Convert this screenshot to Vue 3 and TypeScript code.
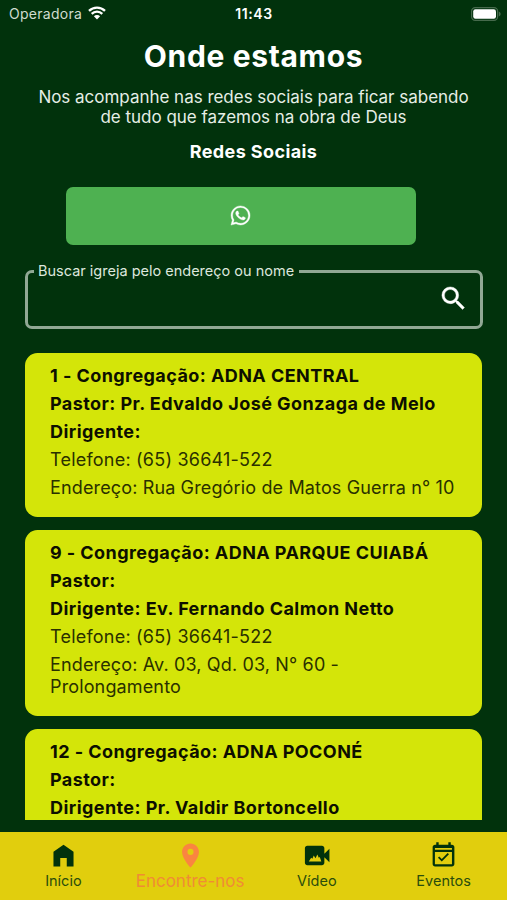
<script setup lang="ts">
interface Church {
  id: number
  name: string
  pastor: string
  leader: string
  phone?: string
  address?: string
}

const churches: Church[] = [
  { id: 1, name: 'ADNA CENTRAL', pastor: 'Pr. Edvaldo José Gonzaga de Melo', leader: '', phone: '(65) 36641-522', address: 'Rua Gregório de Matos Guerra n° 10' },
  { id: 9, name: 'ADNA PARQUE CUIABÁ', pastor: '', leader: 'Ev. Fernando Calmon Netto', phone: '(65) 36641-522', address: 'Av. 03, Qd. 03, N° 60 - Prolongamento' },
  { id: 12, name: 'ADNA POCONÉ', pastor: '', leader: 'Pr. Valdir Bortoncello' },
]

interface Tab {
  label: string
  path: string
  active?: boolean
}

const tabs: Tab[] = [
  { label: 'Início', path: 'M12 3L3.700 8.800v12.400h5.600v-7.200h5.400v7.200h5.600V8.800z' },
  { label: 'Encontre-nos', active: true, path: 'M12 2C8.130 2 5 5.130 5 9c0 5.250 7 13 7 13s7-7.750 7-13c0-3.870-3.130-7-7-7zm0 9.500a2.500 2.500 0 0 1 0-5 2.500 2.500 0 0 1 0 5z' },
  { label: 'Vídeo', path: 'M18.500 10.500V6c0-1.100-.9-2-2-2H4.400c-1.100 0-2 .9-2 2v12c0 1.100.9 2 2 2h12.100c1.100 0 2-.9 2-2v-4.500l4.200 4v-11zM5.600 17l2-3.200 1 .9 1.100-2.700 1.500 2.200 1.500-3 1.200 2.600.8-.5L16 17z' },
  { label: 'Eventos', path: 'M16.530 11.060L15.470 10l-4.880 4.880-2.120-2.120-1.060 1.060L10.590 17l5.940-5.940zM19 3h-1V1h-2v2H8V1H6v2H5c-1.110 0-1.990.9-1.990 2L3 19c0 1.100.890 2 2 2h14c1.100 0 2-.9 2-2V5c0-1.100-.9-2-2-2zm0 16.200H4.900V9H19v10.200zM4.900 7.200V5.700h14.100v1.500z' },
]
</script>

<template>
  <div class="screen">
    <header class="status">
      <div class="carrier">
        <span class="operator">Operadora</span>
        <svg class="wifi" viewBox="0 0 18 14" aria-hidden="true">
          <path d="M1 4.900a11.400 11.400 0 0 1 16 0M3.700 7.900a7.500 7.500 0 0 1 10.600 0" fill="none" stroke="#fff" stroke-width="2.3" />
          <path d="M9 13.400L5.900 10.300a4.400 4.400 0 0 1 6.200 0z" fill="#fff" />
        </svg>
      </div>
      <span class="clock">11:43</span>
      <svg class="battery" viewBox="0 0 30 14" aria-hidden="true">
        <rect x=".6" y=".6" width="26" height="12.8" rx="3.6" fill="none" stroke="#466a4c" stroke-width="1.200" />
        <rect x="2.200" y="2.200" width="22.800" height="9.600" rx="2.200" fill="#fff" />
        <path d="M27.800 4.600c2.400.8 2.400 4 0 4.800z" fill="#466a4c" />
      </svg>
    </header>

    <main class="content">
      <h1>Onde estamos</h1>
      <p class="intro">Nos acompanhe nas redes sociais para ficar sabendo<br />de tudo que fazemos na obra de Deus</p>
      <h2>Redes Sociais</h2>
      <button class="whatsapp" type="button" aria-label="WhatsApp">
        <svg viewBox="0 0 24 24" aria-hidden="true">
          <path d="M12.04 2C6.58 2 2.13 6.45 2.13 11.910c0 1.750.46 3.450 1.320 4.950L2.050 22l5.250-1.380c1.450.79 3.080 1.210 4.740 1.210 5.460 0 9.910-4.450 9.910-9.910 0-2.650-1.030-5.140-2.900-7.010A9.816 9.816 0 0 0 12.040 2m.010 1.670c2.200 0 4.260.860 5.820 2.420a8.225 8.225 0 0 1 2.410 5.830c0 4.540-3.700 8.230-8.240 8.230-1.480 0-2.930-.390-4.190-1.150l-.300-.170-3.120.820.830-3.040-.200-.320a8.188 8.188 0 0 1-1.260-4.380c.010-4.540 3.700-8.240 8.250-8.240M8.530 7.330c-.160 0-.430.060-.660.310-.220.250-.870.860-.870 2.070 0 1.220.890 2.390 1 2.560.140.170 1.760 2.670 4.250 3.730.590.270 1.050.420 1.410.530.590.190 1.130.160 1.560.100.480-.070 1.460-.600 1.670-1.180s.210-1.070.150-1.180c-.070-.100-.230-.160-.480-.270-.250-.140-1.470-.740-1.690-.820-.230-.080-.370-.120-.560.120-.160.250-.640.810-.780.970-.150.170-.290.190-.530.070-.260-.130-1.060-.390-2-1.230-.740-.660-1.230-1.470-1.380-1.720-.120-.240-.010-.390.110-.500.110-.110.270-.290.370-.440.130-.140.170-.250.250-.410.080-.170.040-.310-.020-.430-.060-.110-.560-1.350-.770-1.840-.200-.480-.400-.420-.560-.430-.140 0-.300-.010-.470-.010" fill="#fff" stroke="#fff" stroke-width=".4" />
        </svg>
      </button>

      <fieldset class="search">
        <legend>Buscar igreja pelo endereço ou nome</legend>
        <svg viewBox="0 0 24 24" aria-hidden="true">
          <path d="M15.500 14h-.79l-.28-.27A6.471 6.471 0 0 0 16 9.500 6.500 6.500 0 1 0 9.500 16c1.610 0 3.090-.590 4.230-1.570l.27.28v.79l5 4.990L20.490 19l-4.990-5zm-6 0C7.010 14 5 11.990 5 9.500S7.010 5 9.500 5 14 7.010 14 9.500 11.990 14 9.500 14z" fill="#fff" stroke="#fff" stroke-width=".3" />
        </svg>
      </fieldset>

      <section class="list">
        <article v-for="church in churches" :key="church.id" class="card">
          <strong>{{ church.id }} - Congregação: {{ church.name }}</strong>
          <strong>Pastor: {{ church.pastor }}</strong>
          <strong>Dirigente: {{ church.leader }}</strong>
          <span v-if="church.phone" class="phone">Telefone: {{ church.phone }}</span>
          <span v-if="church.address">Endereço: {{ church.address }}</span>
        </article>
      </section>
    </main>

    <nav class="tabs">
      <a v-for="tab in tabs" :key="tab.label" class="tab" :class="{ active: tab.active }">
        <svg viewBox="0 0 24 24" aria-hidden="true"><path :d="tab.path" fill="currentColor" fill-rule="evenodd" /></svg>
        <span>{{ tab.label }}</span>
      </a>
    </nav>
  </div>
</template>

<style>
body {
  margin: 0;
  background: #01320c;
}
</style>

<style scoped>
.screen {
  box-sizing: border-box;
  width: 507px;
  height: 900px;
  display: flex;
  flex-direction: column;
  overflow: hidden;
  background: #01320c;
  color: #fff;
  font-family: Inter, 'Liberation Sans', sans-serif;
}
.status {
  display: grid;
  grid-template-columns: 1fr auto 1fr;
  align-items: center;
  height: 28px;
  padding: 0 6px 0 9px;
  font-size: 14px;
  line-height: 20px;
}
.carrier {
  display: flex;
  align-items: center;
  gap: 6px;
}
.operator {
  color: #cfdccf;
  letter-spacing: 0.27px;
}
.wifi {
  width: 18px;
  height: 14px;
  margin-top: -2px;
}
.clock {
  margin-right: 2px;
  font-weight: 600;
  letter-spacing: 0.6px;
}
.battery {
  width: 30px;
  height: 14px;
  margin-top: -1px;
  justify-self: end;
}
.content {
  flex: none;
  height: 791.5px;
  display: flex;
  flex-direction: column;
  overflow: hidden;
  padding: 0 25px;
}
h1 {
  margin: 8px 0 0;
  font-size: 30px;
  line-height: 40px;
  font-weight: 700;
  letter-spacing: 0.65px;
  text-align: center;
}
.intro {
  margin: 10.5px 0 0;
  color: #e6eee6;
  font-size: 17px;
  line-height: 20.5px;
  letter-spacing: -0.02px;
  text-align: center;
  white-space: nowrap;
}
h2 {
  margin: 12px 0 0;
  font-size: 18px;
  line-height: 24px;
  font-weight: 700;
  letter-spacing: 0.4px;
  text-align: center;
}
.whatsapp {
  display: flex;
  flex: none;
  align-items: center;
  justify-content: center;
  width: 350px;
  height: 58.5px;
  margin: 23px 0 0 40.5px;
  padding: 0;
  border: 0;
  border-radius: 7px;
  background: #4eb151;
}
.whatsapp svg {
  width: 23px;
  height: 23px;
}
.search {
  box-sizing: border-box;
  display: flex;
  flex: none;
  justify-content: flex-end;
  width: 458px;
  height: 67.5px;
  margin: 16px 0 0;
  padding: 2px 11px 0 6px;
  border: 3px solid #91a895;
  border-radius: 7px;
}
.search legend {
  padding: 0 5px 0 4px;
  color: #dde7dd;
  font-size: 14.5px;
  line-height: 20px;
}
.search svg {
  width: 31px;
  height: 31px;
}
.list {
  display: flex;
  flex: none;
  flex-direction: column;
  gap: 12.5px;
  margin-top: 24px;
}
.card {
  display: flex;
  flex-direction: column;
  gap: 6px;
  padding: 12.5px 25px 18px;
  border-radius: 12.5px;
  background: #d4e509;
  color: #2a3000;
  font-size: 18px;
  line-height: 22px;
  letter-spacing: 0.14px;
}
.card strong {
  color: #0d0f00;
  font-weight: 700;
  letter-spacing: 0.43px;
}
.card .phone {
  letter-spacing: 0.22px;
}
.tabs {
  display: grid;
  grid-template-columns: repeat(4, 1fr);
  height: 68px;
  margin-top: auto;
  background: #e1ce0d;
}
.tab {
  display: flex;
  flex-direction: column;
  align-items: center;
  gap: 1px;
  padding-top: 9px;
  color: #01320c;
  font-size: 14.5px;
  line-height: 20px;
}
.tab span {
  color: #2b4d0c;
}
.tab svg {
  width: 29px;
  height: 29px;
}
.tab.active {
  color: #fa8540;
  font-size: 17px;
}
.tab.active span {
  color: #f08c34;
}
</style>
